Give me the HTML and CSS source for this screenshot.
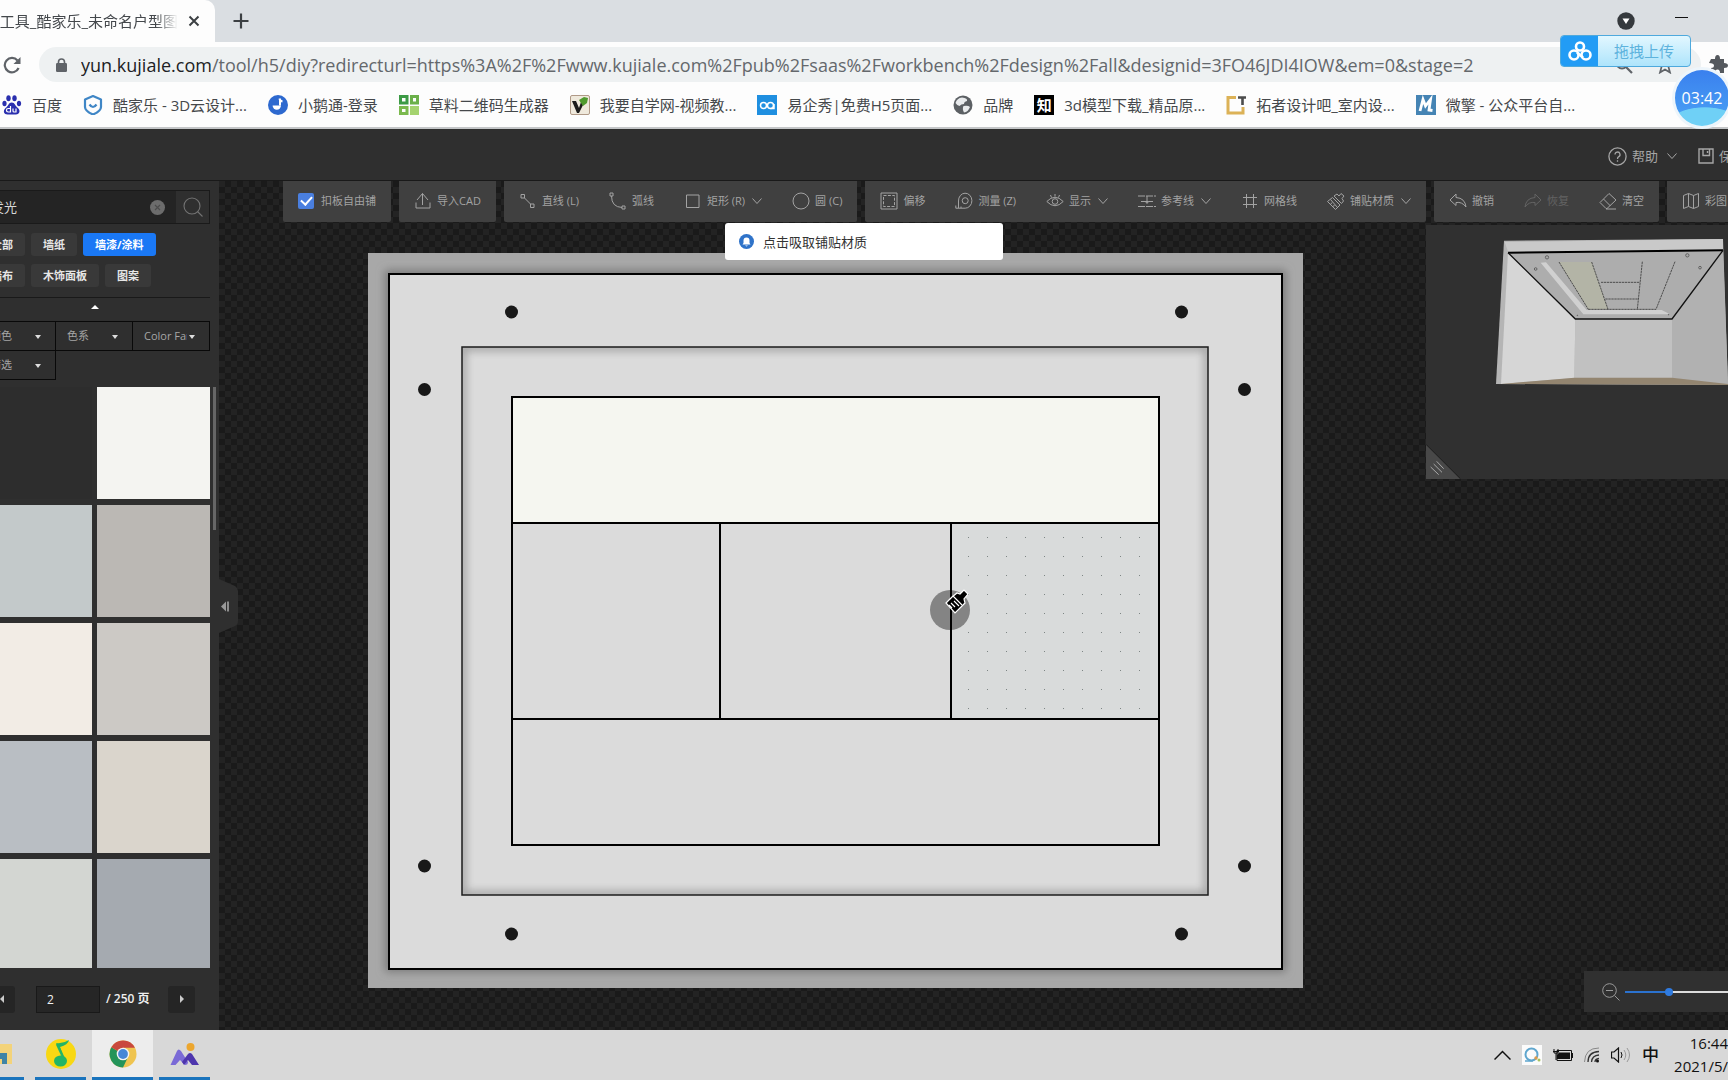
FILE: index.html
```html
<!DOCTYPE html>
<html lang="zh-CN">
<head>
<meta charset="utf-8">
<title>设计工具_酷家乐_未命名户型图</title>
<link rel="stylesheet" href="styles.css">
</head>
<body>
<svg class="sprite" aria-hidden="true">
  <symbol id="chevron" viewBox="0 0 10 10"><path d="M0.500 2.500 5 7.500 9.500 2.500" fill="none" stroke="currentColor"/></symbol>
</svg>
<div class="screen">

  <div class="tabstrip">
    <div class="tab">
      <span class="tab-title">设计工具_酷家乐_未命名户型图</span>
      <button class="plain" aria-label="关闭标签页"><svg width="12" height="12" viewBox="0 0 12 12"><path d="M1.500 1.500 10.500 10.500M10.500 1.500 1.500 10.500" stroke="#3c4043" stroke-width="2"/></svg></button>
    </div>
    <button class="plain new-tab" aria-label="新标签页"><svg width="16" height="16" viewBox="0 0 16 16"><path d="M8 0.500V15.500M0.500 8H15.500" stroke="#3c4043" stroke-width="2.200"/></svg></button>
    <div class="window-tools">
      <button class="plain" aria-label="搜索标签页"><svg width="18" height="20" viewBox="0 0 18 20"><circle cx="9" cy="10" r="8.700" fill="#35393d"/><path d="M5.500 7.500H12.500L9 13Z" fill="#fff"/></svg></button>
      <button class="plain" aria-label="最小化"><svg width="14" height="20" viewBox="0 0 14 20"><path d="M0 6.500H13" stroke="#111"/></svg></button>
    </div>
  </div>

  <div class="address-row">
    <button class="plain" aria-label="重新加载"><svg width="18" height="18" viewBox="0 0 18 18"><path d="M15.600 12A7.200 7.200 0 1 1 14.500 4.500" fill="none" stroke="#5f6368" stroke-width="2.200"/><path d="M17.500 1V8H10.500Z" fill="#5f6368"/></svg></button>
    <div class="address">
      <svg width="11" height="14" viewBox="0 0 11 14"><rect y="5" width="11" height="9" rx="1.200" fill="#5f6368"/><path d="M2.500 6V4a3 3 0 0 1 6 0V6" fill="none" stroke="#5f6368" stroke-width="1.600"/></svg>
      <div class="url"><b>yun.kujiale.com</b>/tool/h5/diy?redirecturl=https%3A%2F%2Fwww.kujiale.com%2Fpub%2Fsaas%2Fworkbench%2Fdesign%2Fall&amp;designid=3FO46JDI4IOW&amp;em=0&amp;stage=2</div>
      <div class="address-actions">
        <svg width="18" height="18" viewBox="0 0 18 18"><circle cx="7" cy="7" r="5.500" fill="none" stroke="#5f6368" stroke-width="2"/><path d="M11 11 17 17" stroke="#5f6368" stroke-width="2.200"/></svg>
        <svg width="16" height="18" viewBox="0 0 16 18"><path d="M8 2 10 7H15L11.500 11 13 16.500 8 13.500 3 16.500 4.500 11 1 7H6Z" fill="none" stroke="#5f6368" stroke-width="1.700"/></svg>
      </div>
    </div>
    <svg class="puzzle" width="19" height="19" viewBox="0 0 19 19"><path d="M2 4H6Q6 0 8.500 0T11 4H15V8Q19 8 19 10.500T15 13V18H11Q11 14.500 8.500 14.500T6 18H2V13Q5 13 5 10.500T0 8Z" fill="#55595e"/></svg>
  </div>

  <nav class="bookmarks">
    <a href="#baidu"><svg width="20" height="20" viewBox="0 0 20 20" fill="#2a2fae"><ellipse cx="6.500" cy="3.200" rx="2.200" ry="3"/><ellipse cx="12.500" cy="3.200" rx="2.200" ry="3"/><ellipse cx="2.500" cy="8.500" rx="2.100" ry="2.800"/><ellipse cx="17" cy="8.500" rx="2.100" ry="2.800"/><path d="M9.700 7.500C13 7.500 13 11 16 13 19 16 17 19.500 14 19.500H5.500C2 19.500 0.500 16 3.500 13 6.500 11 6.500 7.500 9.700 7.500Z"/><path d="M8.500 11V17H6.200a1.500 1.500 0 0 1 0-3.500H8.500M11 13.500V16q0 1 1 1h2V13.500" fill="none" stroke="#fff" stroke-width="1.200"/></svg>百度</a>
    <a href="#kujiale"><svg width="20" height="20" viewBox="0 0 20 20"><path d="M10 1 18 4.500V12Q18 16 10 19.500 2 16 2 12V4.500Z" fill="none" stroke="#3f86c6" stroke-width="2.200" stroke-linejoin="round"/><path d="M6.500 9.500Q10 14.500 13.500 9.500" fill="none" stroke="#3f86c6" stroke-width="2.200"/></svg>酷家乐 - 3D云设计...</a>
    <a href="#xiaoe"><svg width="20" height="20" viewBox="0 0 20 20"><circle cx="10" cy="10" r="10" fill="#2d69cf"/><path d="M11.500 3.500Q12 6 14.500 6.500M12 4V10.500" fill="none" stroke="#fff" stroke-width="2"/><path d="M13 10.500a4.200 4.200 0 0 1-8.400 0Z" fill="#fff"/></svg>小鹅通-登录</a>
    <a href="#caoliao"><svg width="20" height="20" viewBox="0 0 20 20" fill="none" stroke-width="3"><path d="M1.500 1.500H8V8H1.500Z" stroke="#3c9a45"/><path d="M12.500 1.500H18.500V8H12.500Z" stroke="#6bb04a"/><path d="M1.500 12.500H8V18.500H1.500Z" stroke="#7bb94e"/><path d="M11 11H20V20H11Z" fill="#a5d36f"/></svg>草料二维码生成器</a>
    <a href="#51zxw"><svg width="20" height="20" viewBox="0 0 20 20"><rect x="0.500" y="0.500" width="19" height="19" rx="1.500" fill="#efe9dc" stroke="#b09a88"/><path d="M2 6H6L9 13 11 7 14 8 9 18H7Z" fill="#1b1b1b"/><path d="M9 5 14 2 18 3 17 8 13 11 11 8Z" fill="#4f9a2e"/></svg>我要自学网-视频教...</a>
    <a href="#eqxiu"><svg width="20" height="20" viewBox="0 0 20 20"><rect width="20" height="20" fill="#1f8fe0"/><g fill="none" stroke="#fff" stroke-width="1.500"><circle cx="6.500" cy="10.500" r="3"/><circle cx="13.500" cy="10.500" r="3"/><path d="M13.500 13.500H17V9"/></g></svg>易企秀|免费H5页面...</a>
    <a href="#brand"><svg width="20" height="20" viewBox="0 0 20 20"><circle cx="10" cy="10" r="9.500" fill="#5c6064"/><path d="M9 2.500Q15 3 14 6 11 6.500 11 9 8 9 6.500 11 4 10.500 2.500 8 4 3 9 2.500ZM10.500 11Q15 10 17 12 15 17 11 17.500 9 14 10.500 11Z" fill="#e9ebed"/></svg>品牌</a>
    <a href="#znzmo"><span class="zhi">知</span>3d模型下载_精品原...</a>
    <a href="#tuozhe"><svg width="20" height="20" viewBox="0 0 20 20"><path d="M10 2.500H2V18H17V12" fill="none" stroke="#dcb257" stroke-width="3"/><path d="M12 2.500H20M16.500 2.500V10" stroke="#4c4c4c" stroke-width="2.600"/></svg>拓者设计吧_室内设...</a>
    <a href="#weiqing"><svg width="20" height="20" viewBox="0 0 20 20"><rect width="20" height="20" fill="#4584b4"/><path d="M4 16 7 4.500 9.500 11 14.500 4.500 13 15 16.500 15.500" fill="none" stroke="#fff" stroke-width="2.800"/></svg>微擎 - 公众平台自...</a>
  </nav>

  <header class="app-head">
    <button class="plain"><svg width="19" height="19" viewBox="0 0 19 19" fill="none" stroke="currentColor" stroke-width="1.300"><circle cx="9.500" cy="9.500" r="8.600"/><path d="M7 7.500a2.500 2.500 0 1 1 3.500 2.300Q9.500 10.300 9.500 12M9.500 13.300V14.800"/></svg>帮助<svg class="chev" width="10" height="10"><use href="#chevron"/></svg></button>
    <button class="plain save"><svg width="16" height="16" viewBox="0 0 16 16" fill="none" stroke="currentColor" stroke-width="1.400"><path d="M1 1H15V15H1ZM5 1V7.500H11.500V1M9.500 3V5"/></svg>保存</button>
  </header>

  <div class="workspace">
    <aside class="sidebar">
      <div class="side-inner">
        <form class="search">
          <input type="text" value="发光" aria-label="搜索材质">
          <button class="plain" type="reset" aria-label="清除"><svg width="15" height="15" viewBox="0 0 15 15"><circle cx="7.500" cy="7.500" r="7.500" fill="#6c6c6c"/><path d="M5 5 10 10M10 5 5 10" stroke="#4c4c4c" stroke-width="1.200"/></svg></button>
          <button class="plain go" type="button" aria-label="搜索"><svg width="20" height="20" viewBox="0 0 20 20" fill="none" stroke="#737373" stroke-width="1.100"><circle cx="9" cy="9" r="8"/><path d="M14.500 14.500 19.500 19.500"/></svg></button>
        </form>
        <div class="tags">
          <button>全部</button><button>墙纸</button><button class="on">墙漆/涂料</button>
          <button>墙布</button><button>木饰面板</button><button>图案</button>
        </div>
        <button class="plain fold" aria-label="收起"><svg width="8" height="4" viewBox="0 0 8 4"><path d="M0 4 4 0 8 4Z" fill="#fff"/></svg></button>
        <div class="filters">
          <label><select aria-label="颜色"><option>颜色</option></select></label>
          <label><select aria-label="色系"><option>色系</option></select></label>
          <label><select aria-label="Color Family"><option>Color Family</option></select></label>
          <label><select aria-label="筛选"><option>筛选</option></select></label>
        </div>
        <div class="swatches">
          <button class="s1" aria-label="材质 1"></button><button class="s2" aria-label="材质 2"></button>
          <button class="s3" aria-label="材质 3"></button><button class="s4" aria-label="材质 4"></button>
          <button class="s5" aria-label="材质 5"></button><button class="s6" aria-label="材质 6"></button>
          <button class="s7" aria-label="材质 7"></button><button class="s8" aria-label="材质 8"></button>
          <button class="s9" aria-label="材质 9"></button><button class="s10" aria-label="材质 10"></button>
          <i class="scroll-thumb"></i>
        </div>
        <div class="pager">
          <button class="prev" aria-label="上一页"><svg width="4" height="8" viewBox="0 0 4 8"><path d="M4 0V8L0 4Z" fill="#ccc"/></svg></button>
          <input type="text" value="2" aria-label="页码">
          <span>/ 250 页</span>
          <button class="next" aria-label="下一页"><svg width="4" height="8" viewBox="0 0 4 8"><path d="M0 0V8L4 4Z" fill="#ccc"/></svg></button>
        </div>
      </div>
      <button class="plain collapse" aria-label="收起面板"><svg width="19" height="54" viewBox="0 0 19 54"><path d="M0 0 16 7Q19 9 19 12V42Q19 46 16 47L0 54Z" fill="#2f2f2f"/><path d="M2 27.500 7 22.500V32.500Z" fill="#999"/><path d="M9 22.500V32.500" stroke="#999" stroke-width="1.800"/></svg></button>
    </aside>

    <main class="stage">
      <div class="toolbar">
        <div class="group"><label class="tool"><input type="checkbox" checked>扣板自由铺</label></div>
        <div class="group">
          <button class="tool"><svg viewBox="0 0 18 18"><path d="M3 8 8.500 1.500 14 8M8.500 1.500V13M2 10.500V16H16V10.500"/></svg>导入CAD</button>
        </div>
        <div class="group">
          <button class="tool"><svg viewBox="0 0 18 18"><path d="M2 2.500H5.500V6H2ZM11.500 12H15V15.500H11.500ZM5.500 6 11.500 12"/></svg>直线 (L)</button>
          <button class="tool"><svg viewBox="0 0 18 18"><path d="M1 1H4V4H1ZM13 14H16V17H13ZM2.500 4Q2.500 15 13 15.500"/></svg>弧线</button>
          <button class="tool"><svg viewBox="0 0 18 18"><path d="M2.500 3H15V15.500H2.500Z"/></svg>矩形 (R)<svg class="chev"><use href="#chevron"/></svg></button>
          <button class="tool"><svg viewBox="0 0 18 18"><circle cx="9" cy="9" r="8"/></svg>圆 (C)</button>
        </div>
        <div class="group">
          <button class="tool"><svg viewBox="0 0 18 18"><path d="M1 1H17V17H1Z"/><path d="M3.500 3.500H14.500V14.500H3.500Z" stroke-dasharray="3 1.400"/></svg>偏移</button>
          <button class="tool"><svg viewBox="0 0 18 18"><path d="M3.500 15.500V9a6.700 7.500 0 1 1 6.700 7.200H0.800V13.500M3.500 16V14.500M6 16V14.500"/><circle cx="10.200" cy="8.700" r="3"/></svg>测量 (Z)</button>
          <button class="tool"><svg viewBox="0 0 18 18"><path d="M0.800 9.500Q9 1 17.200 9.500 9 18 0.800 9.500ZM9 2V4.500M4.500 3 5.500 5.500M13.500 3 12.500 5.500"/><circle cx="9" cy="9.500" r="2.800"/></svg>显示<svg class="chev"><use href="#chevron"/></svg></button>
          <button class="tool"><svg viewBox="0 0 18 18"><path d="M0 4H18M3 9.500H15M0 14.500H18" stroke-dasharray="7 1"/><path d="M9 4V11M7 9 9 11.500 11 9"/></svg>参考线<svg class="chev"><use href="#chevron"/></svg></button>
          <button class="tool"><svg viewBox="0 0 18 18"><path d="M2 5.500H16M2 12.500H16M5.500 2V16M12.500 2V16"/></svg>网格线</button>
          <button class="tool"><svg viewBox="0 0 18 18"><path d="M7 4 10 2 12 4 14 1.500 17 4 15 6.500 16.500 9 14.500 11.500ZM5.500 5.500 13 13 8.500 17.500 0.500 9.500ZM3.500 7.500 10.500 15.500M7.500 13 5.500 15M5 10.500 3.500 12.500"/></svg>铺贴材质<svg class="chev"><use href="#chevron"/></svg></button>
        </div>
        <div class="group">
          <button class="tool"><svg viewBox="0 0 18 18"><path d="M7 2 1 8 7 13.500V10.500Q13 9.500 17 15 16 6 7 5.500Z"/></svg>撤销</button>
          <button class="tool off" disabled><svg viewBox="0 0 18 18"><path d="M11 2 17 8 11 13.500V10.500Q5 9.500 1 15 2 6 11 5.500Z"/></svg>恢复</button>
          <button class="tool"><svg viewBox="0 0 18 18"><path d="M10 1.500 17 8 8 16.500H7L1 10.500ZM4.500 7 11.500 14M7 17H17"/></svg>清空</button>
        </div>
        <div class="group">
          <button class="tool"><svg viewBox="0 0 18 18"><path d="M1.500 3.500 6.500 1.500 11.500 3.500 16.500 1.500V14.500L11.500 16.500 6.500 14.500 1.500 16.500ZM6.500 1.500V14.500M11.500 3.500V16.500"/></svg>彩图</button>
        </div>
      </div>

      <svg class="plan" viewBox="368 253 935 735">
        <defs>
          <filter id="soft" x="-5%" y="-5%" width="110%" height="110%"><feGaussianBlur stdDeviation="4"/></filter>
          <clipPath id="cove"><rect x="462" y="347" width="746" height="548"/></clipPath>
          <pattern id="grid" x="959" y="528" width="19" height="19" patternUnits="userSpaceOnUse"><rect x="9" y="9" width="1" height="1" fill="#7d8584"/></pattern>
        </defs>
        <rect x="368" y="253" width="935" height="735" fill="#a8a8a8"/>
        <rect x="385" y="270" width="901" height="702" fill="#7a7a7a" filter="url(#soft)"/>
        <rect x="389" y="274" width="893" height="695" fill="#dbdbdb" stroke="#000" stroke-width="2"/>
        <g clip-path="url(#cove)"><rect x="462" y="347" width="746" height="548" fill="none" stroke="#a2a2a2" stroke-width="8" filter="url(#soft)"/></g>
        <rect x="462" y="347" width="746" height="548" fill="none" stroke="#1c1c1c" stroke-width="1.500"/>
        <rect x="512" y="397" width="647" height="126" fill="#f5f6f0"/>
        <rect x="951" y="523" width="208" height="196" fill="#d9dbdb"/>
        <rect x="959" y="528" width="200" height="190" fill="url(#grid)"/>
        <path d="M512 397H1159V845H512ZM512 523H1159M512 719H1159M720 523V719" fill="none" stroke="#000" stroke-width="2"/>
        <g fill="#181818"><circle cx="511.500" cy="312" r="6.500"/><circle cx="1181.500" cy="312" r="6.500"/><circle cx="424.500" cy="389.500" r="6.500"/><circle cx="1244.500" cy="389.500" r="6.500"/><circle cx="424.500" cy="866" r="6.500"/><circle cx="1244.500" cy="866" r="6.500"/><circle cx="511.500" cy="934" r="6.500"/><circle cx="1181.500" cy="934" r="6.500"/></g>
        <circle cx="950" cy="610" r="20" fill="#848484"/>
        <path d="M951 523V719" stroke="#000" stroke-width="2"/>
        <path d="M946 603 952 597 957 593 960 594 964 590 968 594 964 599 965 603 961 607 955 613Z" fill="#000" stroke="#fff" stroke-width="1.200"/>
        <path d="M953 596 962 605M949 605 952 608M951 603 955 607M954 601 959 606" stroke="#fff" stroke-width="1.100"/>
      </svg>

      <div class="toast" role="status"><svg width="15" height="15" viewBox="0 0 15 15"><circle cx="7.500" cy="7.500" r="7.500" fill="#2f73c9"/><path d="M3.500 10.500 4.500 9V6.500a3 3 0 0 1 6 0V9L11.500 10.500ZM6 11.500H9L7.500 12.500Z" fill="#fff"/></svg>点击吸取铺贴材质</div>

      <div class="preview">
        <svg width="302" height="254" viewBox="558 165 906 762">
          <path d="M792 212 1449 207 1464 645 768 642Z" fill="#b5b5b5"/>
          <path d="M794 216 1449 207V239L805 247Z" fill="#c9c9c9"/>
          <path d="M804 247 1006 447 1003 624 783 642Z" fill="#d6d6d6"/>
          <path d="M1006 447H1296V624H1003Z" fill="#c1c1c1"/>
          <path d="M1449 240 1296 447V624L1464 643Z" fill="#b1b1b1"/>
          <path d="M783 642 1003 623H1296L1464 642V645Z" fill="#938570"/>
          <path d="M804 248 1449 241 1296 446 1006 447Z" fill="#adadad"/>
          <path d="M902 278 918 277 1040 420H1265L1290 433H1030Z" fill="#d0d0d0"/>
          <path d="M957 276H1055L1104 418H1045Z" fill="#b3b4a6"/>
          <path d="M957 276 1045 418M1055 276 1104 418M1207 275 1192 418M1305 275 1248 418M1045 418H1248M1083 337H1200M1096 387H1196" fill="none" stroke="#3a3a3a" stroke-width="2.500" stroke-dasharray="7 2"/>
          <path d="M804 248 1449 241" stroke="#000" stroke-width="6"/>
          <path d="M804 248 1006 447H1296L1449 241" fill="none" stroke="#111" stroke-width="4"/>
          <g fill="#aaa" stroke="#444" stroke-width="2"><circle cx="921" cy="262" r="5"/><circle cx="1342" cy="256" r="5"/><circle cx="887" cy="297" r="4"/><circle cx="1380" cy="293" r="4"/><circle cx="1012" cy="436" r="1"/><circle cx="1286" cy="434" r="1"/></g>
          <path d="M558 823 658 923V927H558Z" fill="#484848"/><path d="M558 823 660 925" stroke="#1d1d1d" stroke-width="3"/>
          <path d="M590 874 611 896M581 882 606 907M572 891 596 914" stroke="#a8a8a8" stroke-width="3"/>
        </svg>
      </div>

      <div class="zoom">
        <svg width="18" height="18" viewBox="0 0 18 18" fill="none" stroke="#999"><circle cx="7.500" cy="7.500" r="6.800"/><path d="M4 7.500H11M12.500 12.500 17.500 17.500"/></svg>
        <input type="range" min="0" max="100" value="21" aria-label="缩放">
      </div>
    </main>
  </div>

  <footer class="taskbar">
    <div class="apps">
      <button class="app folder" aria-label="文件资源管理器"><svg width="24" height="24" viewBox="0 0 24 24"><rect x="0" y="2" width="24" height="20" fill="#f3d37a"/><path d="M0 11H19V22H14V17H0Z" fill="#3f84a6"/></svg></button>
      <button class="app" aria-label="QQ音乐"><svg width="30" height="30" viewBox="0 0 30 30"><circle cx="15" cy="15" r="15" fill="#f8d813"/><path d="M10 4Q17 5 23 1 22 6 14 8L18 19" fill="#22b566"/><path d="M11 5 18 20" stroke="#22b566" stroke-width="2.500"/><ellipse cx="14.500" cy="22" rx="6.500" ry="5.500" fill="#22b566"/></svg></button>
      <button class="app active" aria-label="Chrome"><svg width="28" height="28" viewBox="0 0 28 28"><circle cx="14" cy="14" r="13.500" fill="#efc450"/><path d="M14 14 2.300 7.300A13.500 13.500 0 0 0 14 27.500L19 17Z" fill="#23945a"/><path d="M14 14 2.300 7.300A13.500 13.500 0 0 1 25.900 7.700H14Z" fill="#c9483d"/><circle cx="14" cy="14" r="6.300" fill="#f4f4f4"/><circle cx="14" cy="14" r="4.900" fill="#4687d6"/></svg></button>
      <button class="app" aria-label="图片"><svg width="30" height="24" viewBox="0 0 30 24"><circle cx="20.500" cy="5" r="4" fill="#eca62e"/><path d="M0.500 23 7 9Q8.500 6 11 9L18 20Q18 23 15 23L10 18 5.500 23Z" fill="#7a6ad6"/><path d="M12 20 18 12Q20 10 22 12L29 23H22L18 18 14 23Z" fill="#4d35ad"/></svg></button>
    </div>
    <div class="tray">
      <svg width="17" height="10" viewBox="0 0 17 10"><path d="M0.500 9.500 8.500 1.500 16.500 9.500" fill="none" stroke="#111" stroke-width="1.500"/></svg>
      <svg width="20" height="20" viewBox="0 0 20 20"><rect width="20" height="20" fill="#fbfbfb"/><circle cx="9.500" cy="9.500" r="6" fill="none" stroke="#5fa6ce" stroke-width="2"/><path d="M3 16H11" stroke="#5fa6ce" stroke-width="1.500"/><circle cx="14" cy="13" r="1.700" fill="#dd9b4b"/><circle cx="17" cy="15" r="1.500" fill="#a7c15c"/></svg>
      <svg width="20" height="14" viewBox="0 0 20 14"><path d="M4 2.500H18.500V12.500H4ZM1 1V5H5V1M3 5V12M0 3.500H6" fill="none" stroke="#111"/><path d="M6 4.500H17V11H4V7Z" fill="#111"/><path d="M19.500 5V10" stroke="#111"/></svg>
      <svg width="16" height="16" viewBox="0 0 16 16" fill="none" stroke="#333"><path d="M0.500 15Q1 1 15 1" stroke="#888"/><path d="M4 15Q4 5 15 4.500M7.500 15Q8 8.500 15 8M11 15Q11 12 15 11.500" stroke-width="1.300"/><circle cx="13.500" cy="14" r="1.500" fill="#111" stroke="none"/></svg>
      <svg width="20" height="16" viewBox="0 0 20 16" fill="none" stroke="#111"><path d="M0.500 5H3L7.500 1V15L3 11H0.500Z" stroke-width="1.200"/><path d="M10 5Q12 8 10 11" /><path d="M13 3Q16.500 8 13 13M16 1Q21 8 16 15" stroke="#999"/></svg>
      <span class="ime">中</span>
      <div class="clock"><span>16:44</span><span>2021/5/</span></div>
    </div>
  </footer>

  <button class="upload"><span class="upload-mark"><svg width="24" height="21" viewBox="0 0 24 21" fill="none" stroke="#fff" stroke-width="2.600"><circle cx="12" cy="5.500" r="4"/><circle cx="6" cy="14" r="4.500"/><circle cx="18" cy="14" r="4.500"/><path d="M9 11.500 15 16.500"/></svg></span><span class="upload-text">拖拽上传</span></button>
  <div class="timer">03:42</div>
</div>
</body>
</html>
```
FILE: styles.css
```css
* { box-sizing: border-box; }
html, body { margin: 0; height: 100%; }
body {
  overflow: hidden;
  background: #2f2f2f;
  font: 11px/16px "Open Sans", "Noto Sans CJK SC", sans-serif;
  color: #a6a6a6;
}
button, input, select { font: inherit; color: inherit; margin: 0; border: 0; padding: 0; background: none; border-radius: 0; }
svg { display: block; flex: none; }
.sprite { position: absolute; width: 0; height: 0; }
.plain { display: flex; align-items: center; }

.screen { position: relative; display: flex; flex-direction: column; height: 100vh; min-height: 720px; overflow: hidden; }

/* browser chrome */
.tabstrip { display: flex; align-items: center; flex: none; height: 42px; background: #dadee2; }
.tab { display: flex; align-items: center; justify-content: flex-end; gap: 10px; width: 215px; height: 42px; padding: 0 15px 0 0; background: #fdfdfd; border-radius: 0 10px 0 0; overflow: hidden; }
.tab-title { flex: none; font-size: 15px; line-height: 20px; white-space: nowrap; color: #44484c; -webkit-mask-image: linear-gradient(to left, transparent, #000 22px); mask-image: linear-gradient(to left, transparent, #000 22px); }
.new-tab { margin-left: 18px; }
.window-tools { display: flex; gap: 40px; margin-left: auto; padding-right: 39px; }

.address-row { display: flex; align-items: center; flex: none; height: 40px; padding: 5px 0 0 3px; background: #fdfdfd; }
.address { display: flex; align-items: center; flex: 1; min-width: 0; height: 35px; margin-left: 18px; padding: 0 28px 0 17px; border-radius: 18px; background: #eef1f2; }
.url { flex: 1; min-width: 0; margin-left: 14px; font-size: 18px; line-height: 28px; white-space: nowrap; overflow: hidden; color: #64686c; }
.url b { font-weight: 400; color: #202124; }
.address-actions { display: flex; gap: 24px; }
.puzzle { margin-left: 8px; }

.bookmarks { display: flex; align-items: center; flex: none; gap: 21px; height: 47px; padding-left: 2px; background: #fdfdfd; border-bottom: 2px solid #c4c6c8; overflow: hidden; }
.bookmarks a { display: flex; align-items: center; gap: 10px; flex: none; font-size: 15px; line-height: 22px; color: #45484b; text-decoration: none; white-space: nowrap; }
.zhi { width: 20px; height: 20px; background: #000; color: #fff; font-size: 15px; line-height: 20px; font-weight: 700; text-align: center; }

/* application header */
.app-head { display: flex; align-items: center; justify-content: flex-end; flex: none; height: 52px; padding-top: 3px; background: #2f2f2f; border-bottom: 1px solid #191919; }
.app-head button { gap: 5px; font-size: 13px; }
.app-head .chev { margin-left: 4px; }
.app-head .save { width: 30px; margin-left: 21px; overflow: hidden; white-space: nowrap; }

.workspace { display: flex; flex: 1; min-height: 0; }

/* material sidebar */
.sidebar { position: relative; z-index: 2; flex: none; width: 219px; background: #2f2f2f; }
.side-inner { display: flex; flex-direction: column; height: 100%; padding-top: 9px; margin-right: 9px; }
.side-inner > * { margin-left: -21px; flex: none; }
.search { display: flex; align-items: center; height: 34px; border: 1px solid #1a1a1a; background: #242424; }
.search input { flex: 1; min-width: 0; padding-left: 11px; font-size: 13px; color: #d8d8d8; }
.search .go { justify-content: center; width: 33px; height: 32px; margin-left: 11px; background: #2f2f2f; }
.tags { display: flex; flex-wrap: wrap; gap: 8px 6px; margin-top: 9px; padding: 0 12px 10px 0; border-bottom: 1px solid #191919; }
.tags button { height: 23px; padding: 0 12px; border-radius: 3px; background: #393939; color: #e6e6e6; font-weight: 700; }
.tags .on { background: #1a78f5; color: #fff; }
.fold { justify-content: center; height: 23px; padding-bottom: 5px; }
.filters { display: grid; grid-template-columns: repeat(3, 77px); }
.filters label { position: relative; height: 30px; margin: 0 0 -1px -1px; border: 1px solid #090909; }
.filters label::after { content: ""; position: absolute; right: 14px; top: 13px; border: 3px solid transparent; border-top: 4px solid #ddd; border-bottom: 0; }
.filters select { appearance: none; width: 54px; height: 28px; padding-left: 11px; overflow: hidden; text-overflow: clip; outline: 0; }
.side-inner .swatches { position: relative; display: grid; grid-template-columns: 113px 113px; grid-auto-rows: 112px; gap: 6px 5px; flex: 1 1 0; min-height: 0; margin-top: 8px; margin-right: -6px; overflow: hidden; }
.s1 { background: #2d2d2d; } .s2 { background: #f4f4f1; }
.s3 { background: #c3c9ca; } .s4 { background: #bbb8b4; }
.s5 { background: #f2ece5; } .s6 { background: #ccc9c5; }
.s7 { background: #b9bec3; } .s8 { background: #dad5cc; }
.s9 { background: #d3d6d2; } .s10 { background: #a5aab0; }
.scroll-thumb { position: absolute; top: 0; right: 0; width: 3px; height: 143px; background: #666; }
.pager { display: flex; align-items: center; height: 62px; padding: 0 0 0 9px; color: #f0f0f0; font-size: 12px; }
.pager button { display: grid; place-items: center; width: 27px; height: 27px; border-radius: 3px; background: #252525; }
.pager input { width: 64px; height: 27px; margin: 0 6px 0 21px; padding-left: 10px; border: 1px solid #191919; background: #262626; }
.pager .next { margin-left: auto; margin-right: 15px; }
.pager span { white-space: nowrap; font-weight: 600; }
.collapse { position: absolute; left: 219px; top: 398px; }

/* drawing stage */
.stage { position: relative; flex: 1; min-width: 0; overflow: hidden; background: repeating-conic-gradient(#1a1a1a 0 25%, #232323 0 50%) 0 0 / 12px 12px; }
.toolbar { display: flex; gap: 8px; padding-left: 64px; }
.group { display: flex; flex: none; height: 41px; background: #404040; border-radius: 0 0 2px 2px; }
.tool { display: flex; align-items: center; gap: 5px; padding: 0 15px 2px; color: #a3a3a3; white-space: nowrap; }
.tool svg { width: 18px; height: 18px; fill: none; stroke: currentColor; }
.tool .chev { width: 10px; height: 10px; margin-left: 2px; }
.tool input { appearance: none; width: 16px; height: 16px; margin-right: 2px; border-radius: 2px; background: #4a7fdf; display: grid; place-items: center; }
.tool input::after { content: ""; width: 5px; height: 9px; margin-bottom: 2px; border: solid #fff; border-width: 0 2px 2px 0; transform: rotate(42deg); }
.off { color: #636363; }
.plan { width: 935px; height: 735px; margin: 31px 0 0 149px; }

.toast { position: absolute; left: 506px; top: 42px; display: flex; align-items: center; gap: 9px; width: 278px; height: 37px; padding-left: 14px; border-radius: 3px; background: #fff; color: #333; font-size: 13px; }
.preview { position: absolute; right: 0; top: 44px; background: #303030; }
.zoom { position: absolute; right: 0; bottom: 18px; display: flex; align-items: center; gap: 5px; width: 144px; height: 41px; padding-left: 18px; background: #303030; overflow: hidden; }
.zoom input { appearance: none; flex: none; width: 200px; height: 8px; background: linear-gradient(90deg, #2b72cf 44px, #dcdcdc 0) center / 100% 2px no-repeat; }
.zoom input::-webkit-slider-thumb { appearance: none; width: 8px; height: 8px; border-radius: 50%; background: #2f7be0; }

/* desktop taskbar */
.taskbar { display: flex; justify-content: space-between; flex: none; height: 50px; background: #d8d8d8; color: #111; overflow: hidden; }
.apps { display: flex; gap: 6px; }
.app { display: flex; align-items: center; justify-content: center; width: 51px; border-bottom: 3px solid #1a74bd; }
.active { width: 61px; background: #ededed; }
.folder { width: 24px; margin-right: 5px; justify-content: flex-end; padding-right: 12px; }
.tray { display: flex; align-items: center; gap: 11px; }
.ime { font-size: 17px; line-height: 24px; font-weight: 500; }
.clock { display: flex; flex-direction: column; align-items: flex-end; width: 60px; margin-left: -2px; font-size: 15px; line-height: 23px; }

/* floating desktop widgets */
.upload { position: absolute; top: 35px; right: 37px; display: flex; width: 131px; height: 32px; border: 1px solid #4ea9dd; border-radius: 4px; background: linear-gradient(#e2f7ff, #aee4fb); overflow: hidden; }
.upload-mark { display: grid; place-items: center; width: 37px; height: 100%; background: #229cf5; }
.upload-text { flex: 1; font-size: 15px; line-height: 30px; color: #5eb3dd; }
.timer { position: absolute; top: 67px; right: -4px; display: grid; place-items: center; width: 60px; height: 62px; border: 3px solid #edf5fb; border-radius: 50%; background: radial-gradient(ellipse 70% 34% at 55% 100%, #6fd0f6 96%, transparent), linear-gradient(#3a80ee, #4ba3f5); color: #fff; font-size: 16px; line-height: 20px; }
```
